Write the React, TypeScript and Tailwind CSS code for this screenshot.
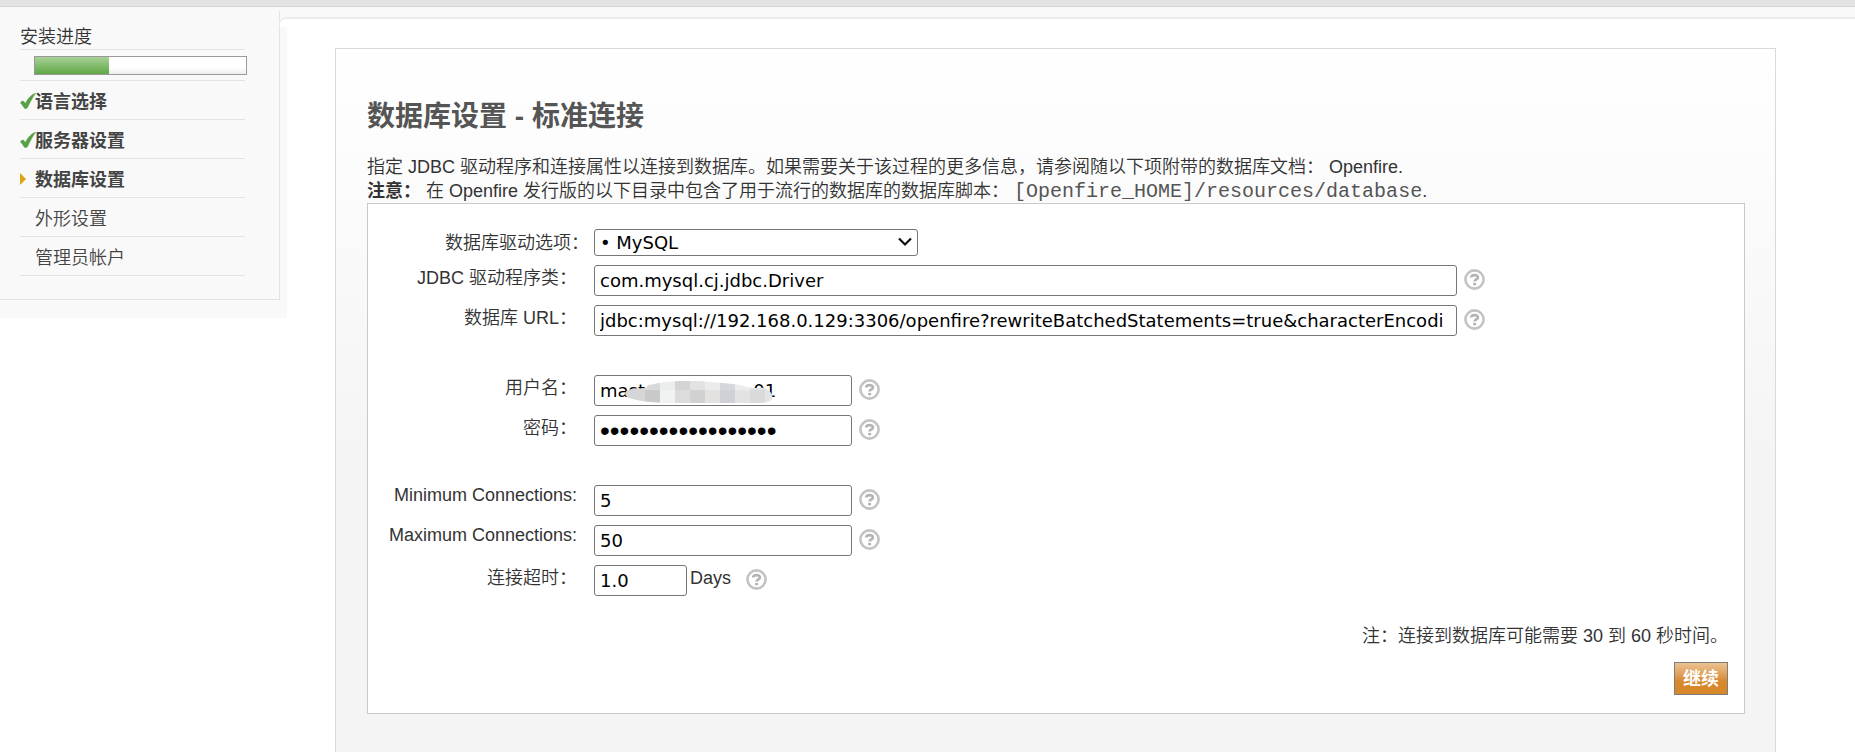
import type { ReactNode } from "react";

const mono = "font-['Liberation_Mono','Noto_Sans_CJK_SC',monospace]";
const fieldBase = "h-[31px] rounded-[3px] border border-[#767676] bg-white px-[5px] leading-6 font-normal text-black";
const field = `${fieldBase} font-['DejaVu_Sans','Noto_Sans_CJK_SC',sans-serif] text-lg`;

function CheckIcon() {
  return (
    <svg viewBox="0 0 16 16" className="h-4 w-4" aria-hidden="true">
      <path
        d="M0.4 10 C1.4 7.8 3.6 7.6 4.4 9 L5.3 10.4 C7.6 5.4 11.2 1.6 15.9 0 C12.8 4.2 9.8 9.6 7.6 14.6 C6.8 16 4.8 16.2 4 14.8 C3 12.8 1.8 11.4 0.4 10 Z"
        fill="#56a046"
        stroke="#56a046"
        strokeWidth="0.4"
      />
    </svg>
  );
}

function ArrowIcon() {
  return (
    <svg viewBox="0 0 6 12" className="h-3 w-1.5" aria-hidden="true">
      <path d="M0 0 L6 6 L0 12 Z" fill="#d9a514" />
    </svg>
  );
}

function HelpButton({ label }: { label: string }) {
  return (
    <button type="button" aria-label={label} className="mt-1 ml-[7px] h-[21px] w-[21px] shrink-0">
      <svg viewBox="0 0 21 21" className="h-[21px] w-[21px]" aria-hidden="true">
        <circle cx="10.5" cy="10.5" r="9.1" fill="#fff" stroke="#c1c3c5" strokeWidth="2.6" />
        <path
          d="M7.2 8.6 C7.2 5.4 13.9 5.3 13.9 8.4 C13.9 10.5 10.6 10.2 10.6 12.6"
          fill="none"
          stroke="#b2b4b6"
          strokeWidth="2.7"
        />
        <rect x="9.1" y="13.9" width="3" height="2.4" fill="#b2b4b6" />
      </svg>
    </button>
  );
}

const steps = [
  { name: "语言选择", state: "done" },
  { name: "服务器设置", state: "done" },
  { name: "数据库设置", state: "current" },
  { name: "外形设置", state: "todo" },
  { name: "管理员帐户", state: "todo" },
];

function Sidebar() {
  return (
    <aside className="h-[311px] w-[287px] shrink-0 bg-[#f9f9f9] pt-1">
      <div className="h-[289px] w-[280px] border-r border-b border-[#e3e3e3] pt-[11px] pl-5">
        <div className="w-[225px]">
          <h2 className="h-[28px] border-b border-[#e3e3e3] text-lg leading-[30px] font-[350]">安装进度</h2>
          <div className="h-[31px] border-b border-[#e3e3e3] pt-1.5 pl-3.5">
            <div
              role="progressbar"
              aria-label="安装进度"
              aria-valuenow={35}
              className="h-[19px] w-[213px] border border-[#999] bg-linear-to-b from-white from-60% to-[#ededed]"
            >
              <div className="h-full w-[35%] bg-linear-to-b from-[#a8d197] to-[#5fa843]" />
            </div>
          </div>
          <ol>
            {steps.map((s) => (
              <li
                key={s.name}
                className="flex h-[39px] items-center border-b border-[#e3e3e3] text-lg text-[#444]"
              >
                <span className="w-[15px] shrink-0 pt-0.5">
                  {s.state === "done" && <CheckIcon />}
                  {s.state === "current" && <ArrowIcon />}
                </span>
                <span className={s.state === "todo" ? "pt-1 leading-6 font-[350]" : "pt-1 leading-6 font-bold"}>
                  {s.name}
                </span>
              </li>
            ))}
          </ol>
        </div>
      </div>
    </aside>
  );
}

function Row({ id, label, pad, children }: { id: string; label: string; pad: string; children: ReactNode }) {
  return (
    <div className="grid grid-cols-[226px_1fr] items-start">
      <label htmlFor={id} className={`text-right leading-6 whitespace-nowrap ${pad}`}>
        {label}
      </label>
      <div className="flex min-w-0 items-start">{children}</div>
    </div>
  );
}

function Mosaic() {
  const top = ["#d6d6d8", "#d9d9da", "#eceeee", "#d5d4d3", "#e2e2e2", "#ebebec", "#d6d7da", "#ececec", "#e2e2e2", "#e5e5e5"];
  const low = ["#d6d6d8", "#c9c9ca", "#f1f2f2", "#dcdcdd", "#d1d1d2", "#e4e2e1", "#d0d1d6", "#e3e3e4", "#dadadb", "#e5e5e5"];
  return (
    <svg viewBox="0 0 148 22" className="pointer-events-none absolute top-1.5 left-[31px] h-[22px] w-[148px]" aria-hidden="true">
      <clipPath id="smear">
        <path d="M0 12 C2 7 10 8 21 7 L23 4 C28 3 30 3 34 2 C46 0 54 0 64 0 C84 0 92 2 108 3 C116 3 120 7 132 7 C144 5 149 14 147 18 C145 22 138 22 130 22 L50 22 C30 22 12 20 4 17 C1 15 0 14 0 12 Z" />
      </clipPath>
      <g clipPath="url(#smear)">
        {top.map((c, i) => (
          <rect key={i} x={i === 0 ? 0 : 5 + i * 15} y="0" width={i === 0 ? 20 : 15} height="9" fill={c} />
        ))}
        {low.map((c, i) => (
          <rect key={i} x={i === 0 ? 0 : 5 + i * 15} y="9" width={i === 0 ? 20 : 15} height="13" fill={c} />
        ))}
      </g>
    </svg>
  );
}

export default function App() {
  return (
    <div className="flex min-h-screen flex-col bg-white font-['Liberation_Sans','Noto_Sans_CJK_SC',sans-serif] text-lg text-[#333]">
      <header className="h-[7px] shrink-0 border-b border-[#d4d4d4] bg-[#e3e3e3]" />
      <div className="flex flex-1 items-stretch bg-linear-to-b from-[#f9f9f9] from-[20px] to-white to-[20px]">
        <Sidebar />
        <div className="-ml-2 flex min-w-0 flex-1 flex-col pt-2.5">
          <div className="h-2.5 rounded-tl-[7px] border-t-2 border-l border-[#ebebeb] bg-white" />
          <main className="mt-[21px] mr-[79px] ml-14 flex-1 border border-b-0 border-[#d9d9d9] bg-linear-to-b from-white to-[#f4f4f4] to-[420px] pt-12 pr-[30px] pb-[38px] pl-[31px] font-[350]">
            <h1 className="text-[28px] leading-10 font-bold text-[#555]">数据库设置 - 标准连接</h1>
            <p className="mt-[18px] leading-6">
              指定 JDBC 驱动程序和连接属性以连接到数据库。如果需要关于该过程的更多信息，请参阅随以下项附带的数据库文档： Openfire.
              <br />
              <b className="font-bold">注意：</b> 在 Openfire 发行版的以下目录中包含了用于流行的数据库的数据库脚本：{" "}
              <code className={`text-xl leading-none text-[#555] ${mono}`}>[Openfire_HOME]/resources/database</code>.
            </p>
            <form className="border border-[#c9c9c9] bg-white pt-[25px] pr-4 pb-[18px]" onSubmit={(e) => e.preventDefault()}>
              <div className="flex flex-col gap-[9px]">
                <Row id="driver" label="数据库驱动选项：" pad="pt-0.5 pr-[5px]">
                  <div className="relative w-[324px]">
                    <select
                      id="driver"
                      className="block h-[27px] w-full appearance-none rounded-[3px] border border-[#767676] bg-white px-[5px] font-['DejaVu_Sans',sans-serif] text-lg leading-6 font-normal text-black"
                    >
                      <option>• MySQL</option>
                    </select>
                    <svg viewBox="0 0 14 10" className="pointer-events-none absolute top-2 right-1.5 h-2.5 w-3.5" aria-hidden="true">
                      <path d="M1 1.5 L7 7.5 L13 1.5" fill="none" stroke="#111" strokeWidth="2.2" />
                    </svg>
                  </div>
                </Row>
                <Row id="class" label="JDBC 驱动程序类：" pad="pt-px pr-[17px]">
                  <input id="class" className={`w-[863px] min-w-0 ${field}`} defaultValue="com.mysql.cj.jdbc.Driver" />
                  <HelpButton label="JDBC 驱动程序类" />
                </Row>
                <Row id="url" label="数据库 URL：" pad="pt-px pr-[17px]">
                  <input
                    id="url"
                    className={`w-[863px] min-w-0 ${field}`}
                    defaultValue="jdbc:mysql://192.168.0.129:3306/openfire?rewriteBatchedStatements=true&characterEncodi"
                  />
                  <HelpButton label="数据库 URL" />
                </Row>
              </div>
              <div className="mt-[39px] flex flex-col gap-[9px]">
                <Row id="user" label="用户名：" pad="pt-px pr-[17px]">
                  <div className="relative w-[258px]">
                    <input id="user" className={`block w-full ${field}`} defaultValue={"maste" + "\u00a0".repeat(17) + "01"} />
                    <Mosaic />
                  </div>
                  <HelpButton label="用户名" />
                </Row>
                <Row id="password" label="密码：" pad="pt-px pr-[17px]">
                  <input
                    id="password"
                    type="password"
                    className={`w-[258px] font-['Liberation_Sans',sans-serif] text-[28px] ${fieldBase}`}
                    defaultValue="••••••••••••••••••"
                  />
                  <HelpButton label="密码" />
                </Row>
              </div>
              <div className="mt-[39px] flex flex-col gap-[9px]">
                <Row id="min" label="Minimum Connections:" pad="-mt-0.5 pr-[17px]">
                  <input id="min" className={`w-[258px] ${field}`} defaultValue="5" />
                  <HelpButton label="Minimum Connections" />
                </Row>
                <Row id="max" label="Maximum Connections:" pad="-mt-0.5 pr-[17px]">
                  <input id="max" className={`w-[258px] ${field}`} defaultValue="50" />
                  <HelpButton label="Maximum Connections" />
                </Row>
                <Row id="timeout" label="连接超时：" pad="pt-px pr-[17px]">
                  <input id="timeout" className={`w-[93px] ${field}`} defaultValue="1.0" />
                  <span className="pt-px pr-2 pl-[3px] leading-6">Days</span>
                  <HelpButton label="连接超时" />
                </Row>
              </div>
              <div className="mt-[28px] flex flex-col items-end">
                <p className="leading-6">注：连接到数据库可能需要 30 到 60 秒时间。</p>
                <button
                  type="submit"
                  className="mt-3.5 h-[33px] border border-[#7d7d7d] bg-linear-to-b from-[#ebc391] to-[#d6882a] to-60% px-2 leading-6 font-bold text-white"
                >
                  继续
                </button>
              </div>
            </form>
          </main>
        </div>
      </div>
    </div>
  );
}
